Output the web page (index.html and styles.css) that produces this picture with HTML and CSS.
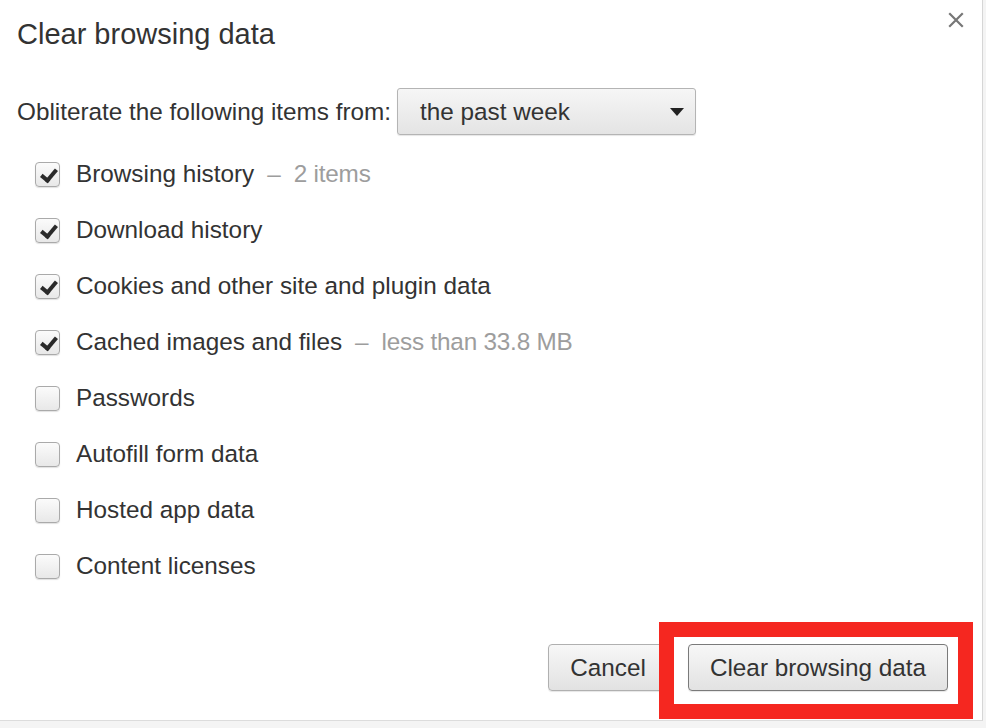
FILE: index.html
```html
<!DOCTYPE html>
<html lang="en">
<head>
  <meta charset="UTF-8">
  <title>Clear browsing data</title>
  <link rel="stylesheet" href="styles.css">
</head>
<body>
  <div class="dialog">
    <button class="close-btn" aria-label="Close">
      <svg width="16" height="16" viewBox="0 0 16 16"><path d="M2 2 L14 14 M14 2 L2 14" stroke="#777" stroke-width="2.2" stroke-linecap="square"/></svg>
    </button>

    <h1 class="title">Clear browsing data</h1>

    <div class="range">
      <span>Obliterate the following items from:</span>
      <div class="select">
        <span>the past week</span>
        <span class="arrow"></span>
      </div>
    </div>

    <ul class="options">
      <li><span class="box checked"></span>Browsing history<span class="extra">–&nbsp; 2 items</span></li>
      <li><span class="box checked"></span>Download history</li>
      <li><span class="box checked"></span>Cookies and other site and plugin data</li>
      <li><span class="box checked"></span>Cached images and files<span class="extra">–&nbsp; less than 33.8 MB</span></li>
      <li><span class="box"></span>Passwords</li>
      <li><span class="box"></span>Autofill form data</li>
      <li><span class="box"></span>Hosted app data</li>
      <li><span class="box"></span>Content licenses</li>
    </ul>

    <div class="actions">
      <button class="btn">Cancel</button>
      <button class="btn primary">Clear browsing data</button>
    </div>

    <div class="highlight"></div>
  </div>
</body>
</html>
```

FILE: styles.css
```css
* {
  margin: 0;
  padding: 0;
  box-sizing: border-box;
}

body {
  font-family: "Liberation Sans", Arial, sans-serif;
  background: #f4f4f4;
  color: #333;
  width: 986px;
  height: 728px;
  overflow: hidden;
}

.dialog {
  position: relative;
  width: 983px;
  height: 721px;
  background: #fff;
  border-right: 1px solid #d6d6d6;
  border-bottom: 1px solid #dcdcdc;
  padding: 17px 34px 0 17px;
}

.close-btn {
  position: absolute;
  top: 12px;
  right: 18px;
  background: none;
  border: none;
  width: 16px;
  height: 16px;
}

.title {
  font-size: 29px;
  font-weight: normal;
  line-height: 34px;
  color: #333;
}

.range {
  display: flex;
  align-items: center;
  gap: 6px;
  margin-top: 37px;
  font-size: 24.3px;
}

.select {
  display: flex;
  align-items: center;
  justify-content: space-between;
  width: 299px;
  height: 47px;
  padding: 0 11px 0 22px;
  border: 1px solid #b4b4b4;
  border-radius: 3px;
  background: linear-gradient(#f6f6f6, #e4e4e4);
  box-shadow: 0 1px 1px rgba(0, 0, 0, 0.1);
}

.arrow {
  width: 0;
  height: 0;
  border-left: 7px solid transparent;
  border-right: 7px solid transparent;
  border-top: 8px solid #222;
}

.options {
  list-style: none;
  margin-top: 11px;
  font-size: 24.3px;
}

.options li {
  display: flex;
  align-items: center;
  height: 56px;
  padding-left: 18px;
}

.box {
  position: relative;
  width: 25px;
  height: 25px;
  margin-right: 16px;
  border: 1px solid #aaa;
  border-radius: 4px;
  background: linear-gradient(#fbfbfb, #e8e8e8);
  box-shadow: 0 1px 1px rgba(0, 0, 0, 0.12);
}

.box.checked::after {
  content: "";
  position: absolute;
  left: 8px;
  top: 3px;
  width: 6px;
  height: 12px;
  border-right: 4px solid #2a2a2a;
  border-bottom: 4px solid #2a2a2a;
  transform: rotate(40deg);
}

.extra {
  color: #9d9d9d;
  margin-left: 13px;
  letter-spacing: -0.2px;
}

.actions {
  display: flex;
  justify-content: flex-end;
  gap: 20px;
  margin-top: 50px;
}

.btn {
  font-family: inherit;
  font-size: 24.3px;
  color: #333;
  height: 47px;
  padding: 0 21px;
  border: 1px solid #b0b0b0;
  border-radius: 4px;
  background: linear-gradient(#f7f7f7, #e2e2e2);
  box-shadow: 0 1px 1px rgba(0, 0, 0, 0.1);
}

.btn.primary {
  border-color: #7a7a7a;
}

.highlight {
  position: absolute;
  left: 659px;
  top: 622px;
  width: 314px;
  height: 97px;
  border: 15px solid #f52720;
}
```
